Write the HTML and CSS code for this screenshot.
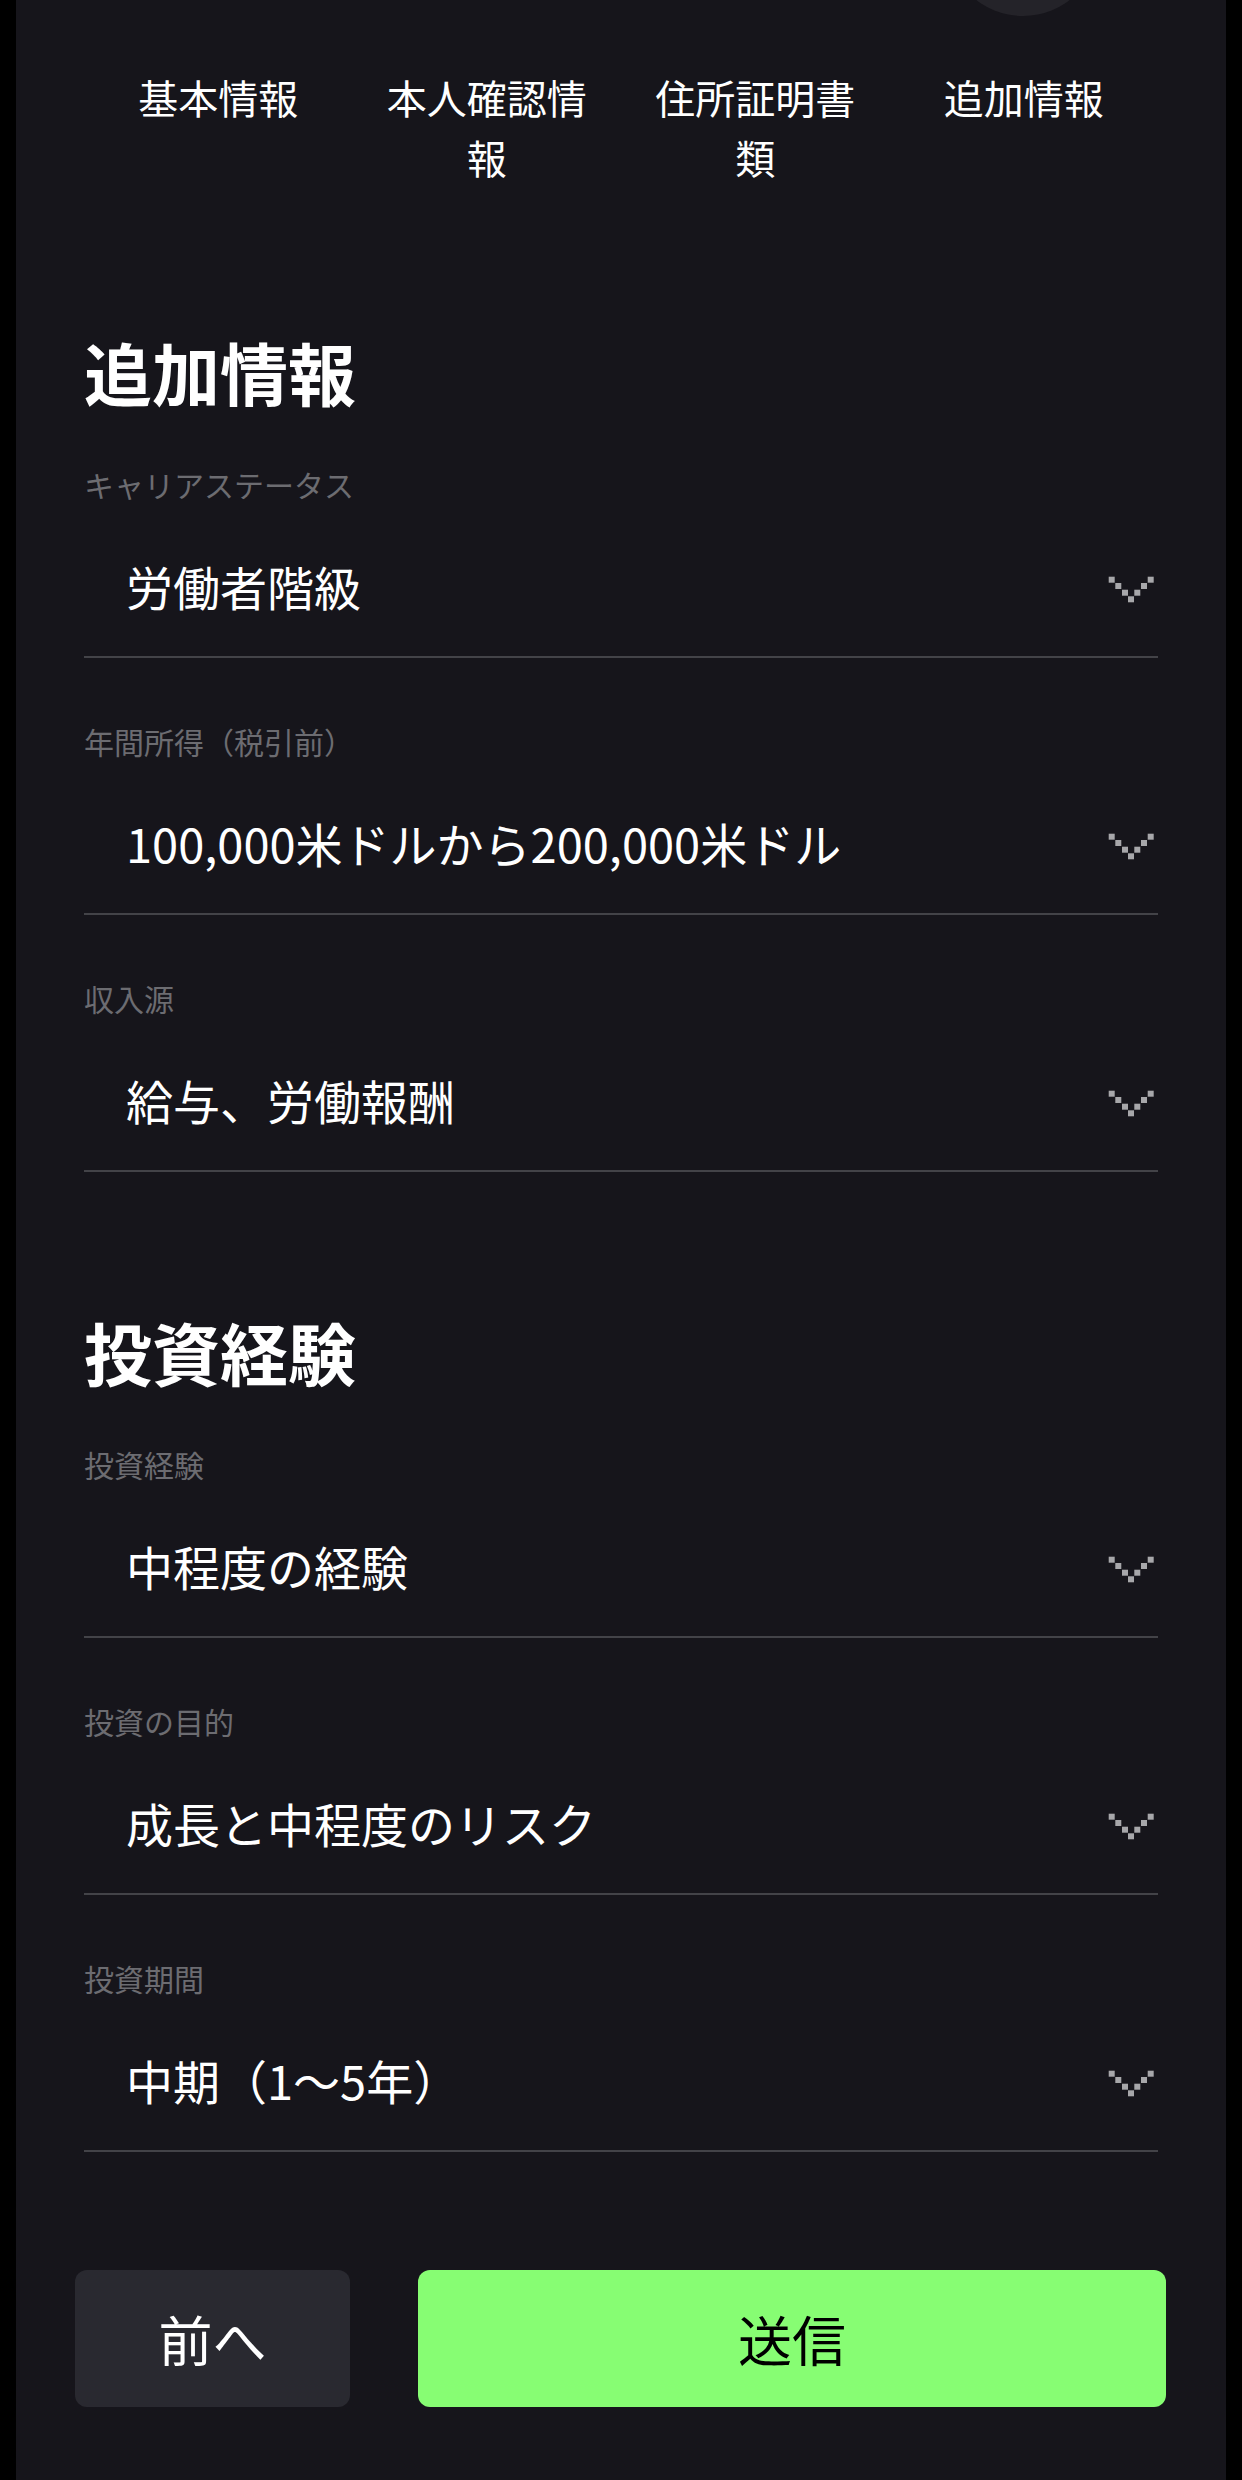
FILE: index.html
```html
<!DOCTYPE html>
<html lang="ja">
<head>
    <meta charset="UTF-8">
    <meta name="viewport" content="width=device-width, initial-scale=1.0">
    <title>追加情報</title>
    <link rel="stylesheet" href="styles.css">
</head>

<body>
    <div class="screen">
        <div class="top-bubble"></div>

        <!-- steps -->
        <div class="steps">
            <div class="step">基本情報</div>
            <div class="step">本人確認情報</div>
            <div class="step">住所証明書類</div>
            <div class="step">追加情報</div>
        </div>

        <div class="section">
            <h2>追加情報</h2>
            <div class="fields">
                <div class="field">
                    <div class="field-label">キャリアステータス</div>
                    <div class="select">
                        <span>労働者階級</span>
                        <svg class="chevron" viewBox="0 0 46 27"><g><rect x="0.7" y="0.7" width="6" height="6"/><rect x="7.3" y="7" width="6" height="6"/><rect x="14" y="13.7" width="6" height="6"/><rect x="20" y="20.3" width="6" height="6"/><rect x="26.3" y="13.7" width="6" height="6"/><rect x="33" y="7" width="6" height="6"/><rect x="39.7" y="0.7" width="6" height="6"/></g></svg>
                    </div>
                </div>
                <div class="field">
                    <div class="field-label">年間所得（税引前）</div>
                    <div class="select">
                        <span>100,000米ドルから200,000米ドル</span>
                        <svg class="chevron" viewBox="0 0 46 27"><g><rect x="0.7" y="0.7" width="6" height="6"/><rect x="7.3" y="7" width="6" height="6"/><rect x="14" y="13.7" width="6" height="6"/><rect x="20" y="20.3" width="6" height="6"/><rect x="26.3" y="13.7" width="6" height="6"/><rect x="33" y="7" width="6" height="6"/><rect x="39.7" y="0.7" width="6" height="6"/></g></svg>
                    </div>
                </div>
                <div class="field">
                    <div class="field-label">収入源</div>
                    <div class="select">
                        <span>給与、労働報酬</span>
                        <svg class="chevron" viewBox="0 0 46 27"><g><rect x="0.7" y="0.7" width="6" height="6"/><rect x="7.3" y="7" width="6" height="6"/><rect x="14" y="13.7" width="6" height="6"/><rect x="20" y="20.3" width="6" height="6"/><rect x="26.3" y="13.7" width="6" height="6"/><rect x="33" y="7" width="6" height="6"/><rect x="39.7" y="0.7" width="6" height="6"/></g></svg>
                    </div>
                </div>
            </div>
        </div>

        <div class="section">
            <h2>投資経験</h2>
            <div class="fields">
                <div class="field">
                    <div class="field-label">投資経験</div>
                    <div class="select">
                        <span>中程度の経験</span>
                        <svg class="chevron" viewBox="0 0 46 27"><g><rect x="0.7" y="0.7" width="6" height="6"/><rect x="7.3" y="7" width="6" height="6"/><rect x="14" y="13.7" width="6" height="6"/><rect x="20" y="20.3" width="6" height="6"/><rect x="26.3" y="13.7" width="6" height="6"/><rect x="33" y="7" width="6" height="6"/><rect x="39.7" y="0.7" width="6" height="6"/></g></svg>
                    </div>
                </div>
                <div class="field">
                    <div class="field-label">投資の目的</div>
                    <div class="select">
                        <span>成長と中程度のリスク</span>
                        <svg class="chevron" viewBox="0 0 46 27"><g><rect x="0.7" y="0.7" width="6" height="6"/><rect x="7.3" y="7" width="6" height="6"/><rect x="14" y="13.7" width="6" height="6"/><rect x="20" y="20.3" width="6" height="6"/><rect x="26.3" y="13.7" width="6" height="6"/><rect x="33" y="7" width="6" height="6"/><rect x="39.7" y="0.7" width="6" height="6"/></g></svg>
                    </div>
                </div>
                <div class="field">
                    <div class="field-label">投資期間</div>
                    <div class="select">
                        <span>中期（1〜5年）</span>
                        <svg class="chevron" viewBox="0 0 46 27"><g><rect x="0.7" y="0.7" width="6" height="6"/><rect x="7.3" y="7" width="6" height="6"/><rect x="14" y="13.7" width="6" height="6"/><rect x="20" y="20.3" width="6" height="6"/><rect x="26.3" y="13.7" width="6" height="6"/><rect x="33" y="7" width="6" height="6"/><rect x="39.7" y="0.7" width="6" height="6"/></g></svg>
                    </div>
                </div>
            </div>
        </div>

        <div class="actions">
            <button class="btn-prev">前へ</button>
            <button class="btn-submit">送信</button>
        </div>
    </div>
</body>
</html>
```

FILE: styles.css
```css
body {
    margin: 0;
    background: #000;
    font-family: "Noto Sans CJK JP", "Noto Sans", sans-serif;
    color: #fff;
}

.screen {
    position: relative;
    width: 1210px;
    min-height: 2480px;
    margin: 0 auto;
    padding: 67px 68px 0;
    box-sizing: border-box;
    background: #16151b;
    overflow: hidden;
}

/* partly scrolled-off round button at the top */
.top-bubble {
    position: absolute;
    top: -136px;
    left: 931px;
    width: 152px;
    height: 152px;
    border-radius: 50%;
    background: #242329;
}

.steps {
    display: grid;
    grid-template-columns: repeat(4, 1fr);
}

.step {
    padding: 0 20px;
    text-align: center;
    font-size: 40px;
    line-height: 60px;
}

.section {
    margin-top: 145px;
}

.section + .section {
    margin-top: 140px;
}

h2 {
    margin: 0 0 52px;
    font-size: 68px;
    line-height: 80px;
    font-weight: 700;
}

.fields {
    display: flex;
    flex-direction: column;
    gap: 63px;
}

.field {
    padding-bottom: 21px;
    border-bottom: 2px solid #434348;
}

.field-label {
    font-size: 30px;
    line-height: 40px;
    color: #6c6c71;
}

.select {
    display: flex;
    justify-content: space-between;
    align-items: center;
    height: 100px;
    margin-top: 31px;
    padding: 0 4px 0 42px;
    font-size: 47px;
}

.chevron {
    width: 46px;
    height: 27px;
    margin-top: 9px;
    fill: #a7a7aa;
}

.actions {
    display: flex;
    gap: 68px;
    margin: 118px -8px 0 -9px;
}

.actions button {
    height: 137px;
    border: none;
    border-radius: 12px;
    font-family: inherit;
    font-size: 54px;
    cursor: pointer;
}

.btn-prev {
    width: 275px;
    background: #292930;
    color: #fff;
}

.btn-submit {
    flex: 1;
    background: #87fd73;
    color: #000;
}
```
